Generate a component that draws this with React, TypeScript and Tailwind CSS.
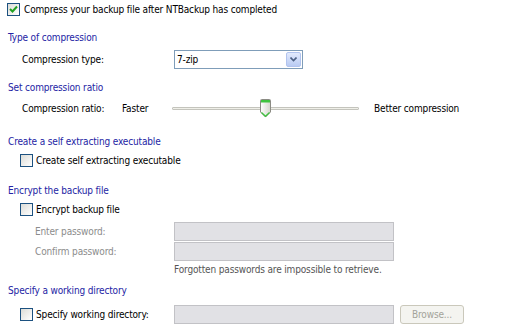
import React from "react";

const font = { fontFamily: '"DejaVu Sans Condensed", "DejaVu Sans", sans-serif' };

function Check({ checked }: { checked?: boolean }) {
  return (
    <div className="w-[13px] h-[13px] border border-[#1c5180] bg-gradient-to-br from-[#dcdcd7] to-white flex items-center justify-center shrink-0">
      {checked && (
        <svg width="9" height="9" viewBox="0 0 9 9">
          <path d="M1 4 L3.5 6.5 L8 1.5" stroke="#21a121" strokeWidth="2" fill="none" />
        </svg>
      )}
    </div>
  );
}

function Heading({ children, mt }: { children: React.ReactNode; mt: string }) {
  return (
    <div className={`h-[13px] leading-[13px] text-[#2424a4] pl-[8px] ${mt}`}>{children}</div>
  );
}

function Thumb() {
  return (
    <svg width="11" height="19" viewBox="0 0 11 19">
      <defs>
        <linearGradient id="tg" x1="0" x2="1" y1="0" y2="0">
          <stop offset="0" stopColor="#ffffff" />
          <stop offset="1" stopColor="#d6d6ce" />
        </linearGradient>
      </defs>
      <path d="M1.5 0.5 H9.5 Q10.5 0.5 10.5 1.5 V13 L5.5 18 L0.5 13 V1.5 Q0.5 0.5 1.5 0.5 Z" fill="url(#tg)" stroke="#8b8b84" />
      <rect x="1" y="1" width="9" height="2.5" fill="#3fc33f" />
      <path d="M1.5 13.5 L5.5 17.3 L9.5 13.5" stroke="#3fc33f" strokeWidth="1.2" fill="none" />
    </svg>
  );
}

export default function App() {
  return (
    <div className="w-[515px] h-[328px] bg-white text-[10px] tracking-[-0.15px] text-black overflow-hidden" style={font}>
      <div className="flex flex-col pt-[3px]">
        <div className="flex items-center h-[13px] pl-[7px]">
          <Check checked />
          <span className="ml-[4px]">Compress your backup file after NTBackup has completed</span>
        </div>

        <Heading mt="mt-[15px]">Type of compression</Heading>
        <div className="flex items-center h-[19px] mt-[6px]">
          <span className="pl-[22px] w-[174px]">Compression type:</span>
          <div className="w-[129px] h-[19px] border border-[#7f9db9] bg-white flex items-center justify-between">
            <span className="pl-[2px]">7-zip</span>
            <div className="w-[15px] h-[15px] mr-[1px] rounded-[2px] border border-[#b2c4ef] bg-gradient-to-b from-[#e2eafd] to-[#b9cbf3] flex items-center justify-center">
              <svg width="7" height="5" viewBox="0 0 7 5">
                <path d="M0.5 0.5 L3.5 3.5 L6.5 0.5" stroke="#4d6185" strokeWidth="1.6" fill="none" />
              </svg>
            </div>
          </div>
        </div>

        <Heading mt="mt-[12px]">Set compression ratio</Heading>
        <div className="flex items-center h-[19px] mt-[5px]">
          <span className="pl-[22px] w-[122px]">Compression ratio:</span>
          <span className="w-[50px]">Faster</span>
          <div className="relative w-[187px] h-[19px] flex items-center">
            <div className="w-full h-[3px] border border-[#c4c4bd] bg-[#efefe8] rounded-[1px]" />
            <div className="absolute left-[88px] top-0">
              <Thumb />
            </div>
          </div>
          <span className="ml-[15px]">Better compression</span>
        </div>

        <Heading mt="mt-[17px]">Create a self extracting executable</Heading>
        <div className="flex items-center h-[13px] mt-[6px] pl-[20px]">
          <Check />
          <span className="ml-[3px]">Create self extracting executable</span>
        </div>

        <Heading mt="mt-[17px]">Encrypt the backup file</Heading>
        <div className="flex items-center h-[13px] mt-[6px] pl-[20px]">
          <Check />
          <span className="ml-[3px]">Encrypt backup file</span>
        </div>
        <div className="flex items-center h-[19px] mt-[6px]">
          <span className="pl-[35px] w-[174px] text-[#8c8c8c]">Enter password:</span>
          <div className="w-[220px] h-[19px] border border-[#c2c2c6] bg-[#e1e1e5]" />
        </div>
        <div className="flex items-center h-[19px] mt-[1px]">
          <span className="pl-[35px] w-[174px] text-[#8c8c8c]">Confirm password:</span>
          <div className="w-[220px] h-[19px] border border-[#c2c2c6] bg-[#e1e1e5]" />
        </div>
        <div className="h-[13px] leading-[13px] mt-[2px] pl-[174px] text-[#555555]">
          Forgotten passwords are impossible to retrieve.
        </div>

        <Heading mt="mt-[8px]">Specify a working directory</Heading>
        <div className="flex items-center h-[19px] mt-[8px]">
          <div className="flex items-center w-[174px] pl-[20px]">
            <Check />
            <span className="ml-[3px]">Specify working directory:</span>
          </div>
          <div className="w-[220px] h-[19px] border border-[#c2c2c6] bg-[#e1e1e5]" />
          <div className="ml-[6px] w-[64px] h-[19px] border border-[#cac8bb] rounded-[3px] bg-[#f4f4f0] text-[#a3a39a] flex items-center justify-center">
            Browse...
          </div>
        </div>
      </div>
    </div>
  );
}
